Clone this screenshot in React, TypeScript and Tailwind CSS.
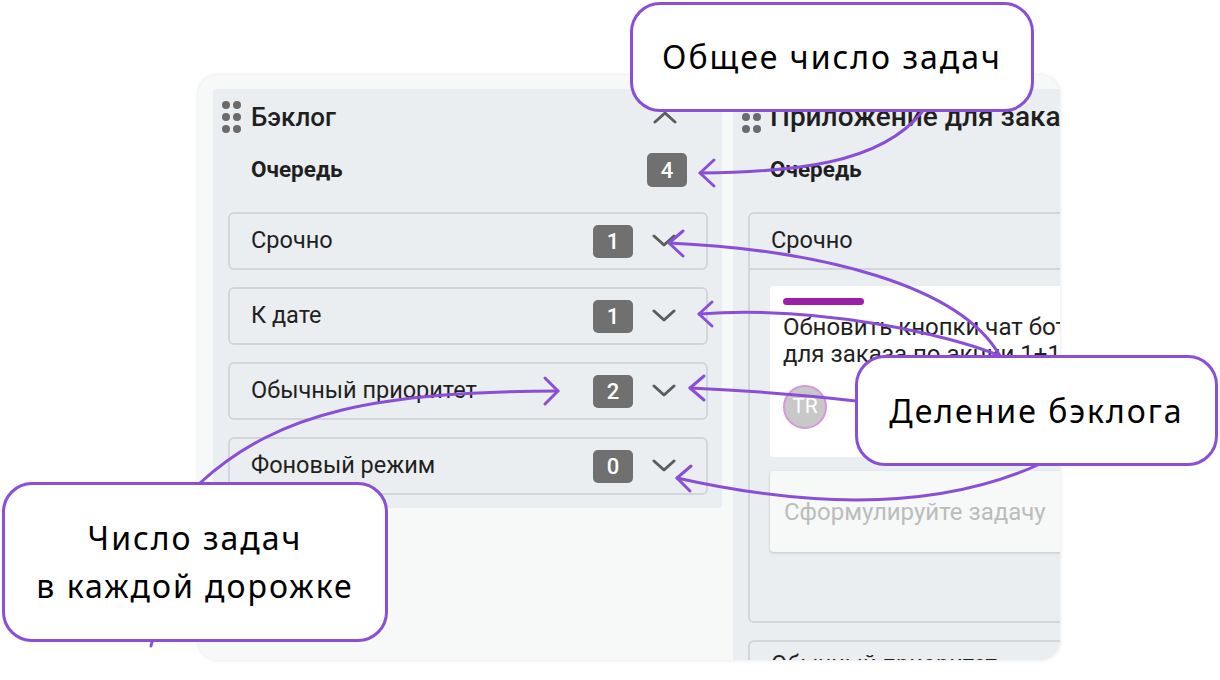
import type { ReactNode } from 'react';

const ui = { fontFamily: 'Roboto, "Liberation Sans", sans-serif' };
const callFont = { fontFamily: '"Noto Sans", "Open Sans", sans-serif' };

function Dots() {
  return (
    <div className="grid grid-cols-2 gap-x-[3px] gap-y-[4px] w-[19px] shrink-0">
      {[0, 1, 2, 3, 4, 5].map((i) => (
        <span key={i} className="block w-[8px] h-[8px] rounded-full bg-[#6b6b6b]" />
      ))}
    </div>
  );
}

function Chevron({ up = false }: { up?: boolean }) {
  return (
    <svg width="24" height="14" viewBox="0 0 24 14" className="shrink-0">
      <path
        d={up ? 'M2 12 L12 3 L22 12' : 'M2 2 L12 11 L22 2'}
        fill="none"
        stroke="#5c5c5c"
        strokeWidth="3"
        strokeLinecap="round"
        strokeLinejoin="round"
      />
    </svg>
  );
}

function Badge({ n, h = 'h-[33px]' }: { n: number; h?: string }) {
  return (
    <span className={`w-[40px] ${h} rounded-[5px] bg-[#707070] text-white text-[22px] font-medium flex items-center justify-center shrink-0`}>
      {n}
    </span>
  );
}

const lanes = [
  { name: 'Срочно', count: 1 },
  { name: 'К дате', count: 1 },
  { name: 'Обычный приоритет', count: 2 },
  { name: 'Фоновый режим', count: 0 },
];

function Callout({ className, children }: { className: string; children: ReactNode }) {
  return (
    <div
      className={`absolute bg-white border-[3px] border-[#8a4fd6] rounded-[30px] flex flex-col items-center justify-center text-black text-[32px] tracking-[2px] leading-[48px] ${className}`}
      style={callFont}
    >
      {children}
    </div>
  );
}

export default function App() {
  return (
    <div className="relative w-[1220px] h-[680px] bg-white overflow-hidden" style={ui}>
      <div className="pl-[198px] pt-[75px]">
        <div className="w-[862px] h-[585px] rounded-[20px] bg-[#f7f8f8] shadow-[0_0_4px_rgba(0,0,0,0.12)] overflow-hidden flex items-start pl-[15px] pt-[14px] text-[#1f1f1f]">
          {/* Бэклог */}
          <div className="w-[509px] shrink-0 bg-[#ebeef0] rounded-[4px] pb-[13px]">
            <div className="h-[56px] flex items-center pl-[9px] pr-[45px]">
              <Dots />
              <span className="ml-[10px] text-[26px] font-medium flex-1">Бэклог</span>
              <Chevron up />
            </div>
            <div className="h-[50px] flex items-center justify-between pl-[38px] pr-[35px]">
              <span className="text-[22.5px] font-bold">Очередь</span>
              <Badge n={4} h="h-[34px]" />
            </div>
            <div className="mt-[17px] flex flex-col gap-[17px] pl-[15px] pr-[14px]">
              {lanes.map((l) => (
                <div
                  key={l.name}
                  className="h-[58px] border-2 border-[#d3d6d8] rounded-[6px] flex items-center pl-[21px] pr-[30px]"
                >
                  <span className="flex-1 text-[23.5px]">{l.name}</span>
                  <Badge n={l.count} />
                  <span className="ml-[19px]">
                    <Chevron />
                  </span>
                </div>
              ))}
            </div>
          </div>

          {/* Приложение */}
          <div className="ml-[11px] w-[420px] shrink-0 h-[600px] bg-[#ebeef0] rounded-[4px]">
            <div className="h-[56px] flex items-center pl-[9px]">
              <Dots />
              <span className="ml-[9px] text-[28px] font-medium whitespace-nowrap">Приложение для заказа</span>
            </div>
            <div className="h-[50px] flex items-center pl-[37px]">
              <span className="text-[22.5px] font-bold">Очередь</span>
            </div>
            <div className="mt-[17px] mx-[15px] h-[411px] border-2 border-[#d3d6d8] rounded-[6px]">
              <div className="h-[56px] flex items-center pl-[21px] border-b-2 border-[#d3d6d8]">
                <span className="text-[23.5px]">Срочно</span>
              </div>
              <div className="pt-[16px] pl-[20px]">
                <div className="bg-white rounded-[4px] h-[171px] pt-[12px] pl-[13px]">
                  <div className="w-[81px] h-[7px] rounded-full bg-[#9c1fa8]" />
                  <div className="mt-[9px] text-[24px] leading-[27px] whitespace-nowrap">
                    <div>Обновить кнопки чат бота</div>
                    <div>для заказа по акции 1+1</div>
                  </div>
                  <div className="mt-[17px] w-[44px] h-[44px] rounded-full bg-[#c8c8c8] border-2 border-[#d596dc] flex items-center justify-center text-white text-[21px]">
                    TR
                  </div>
                </div>
                <div className="mt-[14px] h-[81px] bg-[#f7f8f8] rounded-[4px] shadow-[0_1px_3px_rgba(0,0,0,0.18)] flex items-center pl-[14px]">
                  <span className="text-[24px] text-[#bcbcbc] whitespace-nowrap">Сформулируйте задачу</span>
                </div>
              </div>
            </div>
            <div className="mt-[17px] mx-[15px] h-[58px] border-2 border-[#d3d6d8] rounded-[6px] flex items-start pt-[8px] pl-[21px]">
              <span className="text-[23.5px] leading-[28px]">Обычный приоритет</span>
            </div>
          </div>
        </div>
      </div>

      <svg className="absolute left-0 top-0 pointer-events-none" width="1220" height="680" viewBox="0 0 1220 680">
        <g fill="none" stroke="#8a4fd6" strokeWidth="3" strokeLinecap="round" strokeLinejoin="round">
          <path d="M922 112 C 880 165 790 172 700 173" />
          <path d="M714 160 L700 173 L714 186" />
          <path d="M669 243 C 820 250 960 285 1000 356" />
          <path d="M683 231 L669 243 L683 256" />
          <path d="M699 314 C 820 305 950 335 1000 356" />
          <path d="M712 302 L699 314 L712 326" />
          <path d="M690 388 Q 780 392 856 401" />
          <path d="M704 376 L690 388 L704 400" />
          <path d="M677 478 Q 900 528 1040 464" />
          <path d="M691 466 L677 478 L690 491" />
          <path d="M200 483 C 280 410 380 392 558 391" />
          <path d="M545 378 L558 391 L545 404" />
          <path d="M152 642 L151 646" />
        </g>
      </svg>

      <Callout className="left-[630px] top-[2px] w-[404px] h-[110px]">Общее число задач</Callout>
      <Callout className="left-[855px] top-[355px] w-[363px] h-[111px]">Деление бэклога</Callout>
      <Callout className="left-[2px] top-[482px] w-[386px] h-[160px]">
        <span>Число задач</span>
        <span>в каждой дорожке</span>
      </Callout>
    </div>
  );
}
